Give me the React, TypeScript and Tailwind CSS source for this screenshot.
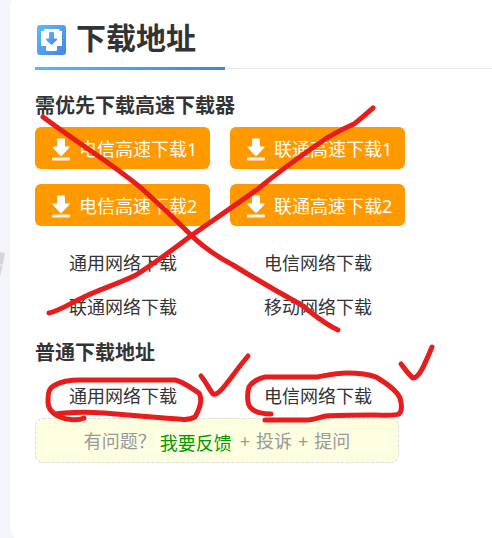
type Item = { label: string };

const fastLinks: Item[] = [
  { label: "电信高速下载1" },
  { label: "联通高速下载1" },
  { label: "电信高速下载2" },
  { label: "联通高速下载2" },
];

const mirrorLinks: Item[] = [
  { label: "通用网络下载" },
  { label: "电信网络下载" },
  { label: "联通网络下载" },
  { label: "移动网络下载" },
];

const plainLinks: Item[] = [{ label: "通用网络下载" }, { label: "电信网络下载" }];

function InboxIcon() {
  return (
    <svg className="mt-1 size-8" viewBox="0 0 32 32" aria-hidden="true">
      <defs>
        <linearGradient id="inbox" x1="0" y1="0" x2="1" y2="1">
          <stop offset="0" stopColor="#5bbcfb" />
          <stop offset="1" stopColor="#4484e4" />
        </linearGradient>
      </defs>
      <rect x="2" y="1" width="29" height="30" rx="3" fill="url(#inbox)" />
      <path d="M9 5H24.500V7H27V22H22V25.500Q22 27 20.500 27H12.500Q11 27 11 25.500V22H6V7H9Z" fill="#fff" />
      <path
        d="M14 9Q14 8 15 8H18Q19 8 19 9V14.500H21.500Q22.500 15 22 16L16.500 21L11 16Q10.500 15 11.500 14.500H14Z"
        fill="url(#inbox)"
      />
    </svg>
  );
}

function DownloadIcon() {
  return (
    <svg className="h-6 w-5 shrink-0" viewBox="0 0 20 24" fill="#fff" aria-hidden="true">
      <path d="M6 2.500Q6 1.500 7 1.500H13Q14 1.500 14 2.500V9.500H18Q19 9.500 18.500 10.500L11 18.500Q10 19.500 9 18.500L1.500 10.500Q1 9.500 2 9.500H6Z" />
      <rect x="1" y="20.500" width="18" height="3" rx="1" opacity=".9" />
    </svg>
  );
}

function LinkGrid({ items }: { items: Item[] }) {
  return (
    <div className="grid max-w-[370px] grid-cols-2 gap-x-5">
      {items.map((item) => (
        <a
          key={item.label}
          href="#"
          className="flex h-11 items-center pl-[34px] text-[18px] whitespace-nowrap text-[#333]"
        >
          {item.label}
        </a>
      ))}
    </div>
  );
}

function MarkerStrokes() {
  return (
    <svg
      className="pointer-events-none absolute top-0 left-0 h-[538px] w-[492px]"
      viewBox="0 0 492 538"
      fill="none"
      stroke="#e71d1d"
      strokeWidth="5"
      strokeLinecap="round"
      strokeLinejoin="round"
      aria-hidden="true"
    >
      <path d="M43 117C58 128 75 140 91 151C107 162 124 174 140 187C158 203 175 219 191 235C203 247 216 256 233 265C254 278 276 291 300 304C311 312 324 324 338 330" />
      <path d="M373 108C366 114 361 119 354 124C345 128 332 134 321 142C304 154 278 172 258 189C237 204 215 219 192 235C171 251 155 263 136 275C120 283 101 289 84 297C73 302 59 311 49 313" />
      <path d="M84 418C78 421 67 420 60 417C51 413 48 408 48 402C48 392 49 388 55 385C62 381 70 380 80 380H175C184 382 191 388 199 393C203 400 199 410 195 417C188 421 177 419 164 418L104 413C87 412 70 412 55 414" />
      <path d="M201 376C206 382 209 389 213 394C220 396 228 380 248 356" />
      <path d="M271 414C259 414 253 411 250 407C247 403 247 393 249 387C252 382 259 378 265 377H317C328 375 337 373 347 373C358 373 368 374 376 377C386 383 397 391 400 398C402 405 402 411 399 414C394 416 384 415 374 415C357 415 338 415 326 416C317 418 313 420 306 420H265" />
      <path d="M401 364C405 369 409 375 413 378C419 378 424 366 432 347" />
    </svg>
  );
}

export default function App() {
  return (
    <div className="relative min-h-screen overflow-hidden bg-[#f4f5fb] font-['Noto_Sans','Noto_Sans_CJK_SC',sans-serif] text-[#333]">
      <svg
        className="absolute top-[250px] left-0 h-7 w-[6px]"
        viewBox="0 0 6 28"
        aria-hidden="true"
      >
        <path d="M0 2L5 3L3 14L0 27Z" fill="#d5d6da" />
        <path d="M0 15H3" stroke="#f4f5fb" />
      </svg>
      <main className="-mt-3 -mb-2 ml-[10px] min-h-[557px] rounded-l-[20px] bg-white pt-3 pl-[25px]">
        <header className="flex h-[69px] items-end border-b border-[#e8e9f2]">
          <h1 className="-mb-[2px] flex h-[70px] w-[190px] items-center gap-[9px] border-b-3 border-[#4f9df0] pt-2 text-[30px] leading-none font-bold whitespace-nowrap [border-image:linear-gradient(to_right,#58b9fb,#4481e2)_1]">
            <InboxIcon />
            下载地址
          </h1>
        </header>

        <section>
          <h2 className="pt-5 text-[20px] leading-[34px] font-bold">需优先下载高速下载器</h2>
          <div className="mt-1 grid max-w-[370px] grid-cols-2 gap-x-5 gap-y-[15px]">
            {fastLinks.map((item) => (
              <a
                key={item.label}
                href="#"
                className="flex h-[42px] items-center gap-2 rounded-md bg-[#ff9900] pt-[2px] pl-4 text-[18px] whitespace-nowrap text-white"
              >
                <DownloadIcon />
                {item.label}
              </a>
            ))}
          </div>
          <div className="pt-[15px]">
            <LinkGrid items={mirrorLinks} />
          </div>
        </section>

        <section>
          <h2 className="pt-[7px] pb-1 text-[20px] leading-[34px] font-bold">普通下载地址</h2>
          <LinkGrid items={plainLinks} />
        </section>

        <div className="flex h-[45px] w-full max-w-[364px] items-center justify-center rounded-lg border border-dashed border-[#dcdcdc] bg-[#fdfde0] pt-[2px] text-[18px] whitespace-nowrap text-[#999]">
          <span className="mr-1">有问题？</span>
          <a href="#" className="mr-2 pt-1 text-[#009900]">
            我要反馈
          </a>
          <span className="flex gap-[6px]">
            <span>+</span>
            <span>投诉</span>
            <span>+</span>
            <span>提问</span>
          </span>
        </div>
      </main>
      <MarkerStrokes />
    </div>
  );
}
